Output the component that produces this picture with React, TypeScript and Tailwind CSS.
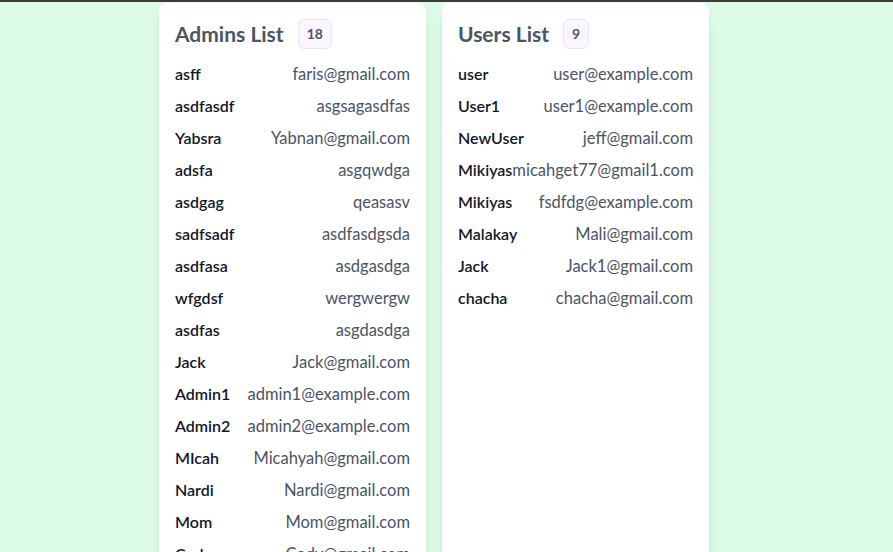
import React from "react";

const admins = [
  ["asff", "faris@gmail.com"],
  ["asdfasdf", "asgsagasdfas"],
  ["Yabsra", "Yabnan@gmail.com"],
  ["adsfa", "asgqwdga"],
  ["asdgag", "qeasasv"],
  ["sadfsadf", "asdfasdgsda"],
  ["asdfasa", "asdgasdga"],
  ["wfgdsf", "wergwergw"],
  ["asdfas", "asgdasdga"],
  ["Jack", "Jack@gmail.com"],
  ["Admin1", "admin1@example.com"],
  ["Admin2", "admin2@example.com"],
  ["MIcah", "Micahyah@gmail.com"],
  ["Nardi", "Nardi@gmail.com"],
  ["Mom", "Mom@gmail.com"],
  ["Cody", "Cody@gmail.com"],
  ["Abel", "Abel@gmail.com"],
  ["Sara", "Sara@gmail.com"],
];

const users = [
  ["user", "user@example.com"],
  ["User1", "user1@example.com"],
  ["NewUser", "jeff@gmail.com"],
  ["Mikiyas", "micahget77@gmail1.com"],
  ["Mikiyas", "fsdfdg@example.com"],
  ["Malakay", "Mali@gmail.com"],
  ["Jack", "Jack1@gmail.com"],
  ["chacha", "chacha@gmail.com"],
];

function ListCard({ title, count, rows }: { title: string; count: number; rows: string[][] }) {
  return (
    <div className="w-[267px] rounded-lg bg-white p-4 shadow-lg">
      <div className="mb-[9px] flex items-center gap-3.5">
        <h2 className="text-[21px] leading-7 font-bold text-[#4b5563]">{title}</h2>
        <span className="rounded-md border border-[#ece6f5] bg-[#faf5ff] px-2 py-1 text-sm font-bold text-[#4b5563]">
          {count}
        </span>
      </div>
      <ul>
        {rows.map(([name, email], i) => (
          <li key={i} className="flex h-8 items-center justify-between text-base leading-6">
            <span className="font-semibold text-[#111827]">{name}</span>
            <span className="text-[16.5px] leading-6 text-[#4b5563]">{email}</span>
          </li>
        ))}
      </ul>
    </div>
  );
}

export default function App() {
  return (
    <div className="h-[552px] overflow-hidden bg-[#dcfce7]" style={{ fontFamily: 'Lato, sans-serif' }}>
      <div className="h-[2px] bg-[#3c3c3c]" />
      <div className="mt-px flex gap-4 pl-[159px]">
        <ListCard title="Admins List" count={18} rows={admins} />
        <ListCard title="Users List" count={9} rows={users} />
      </div>
    </div>
  );
}
